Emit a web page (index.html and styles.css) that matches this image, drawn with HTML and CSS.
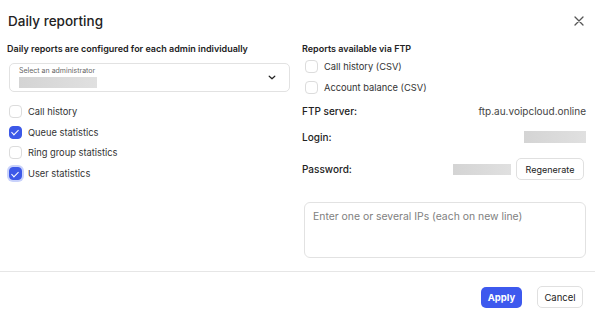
FILE: index.html
```html
<!DOCTYPE html>
<html lang="en">
<head>
    <meta charset="UTF-8">
    <meta name="viewport" content="width=device-width, initial-scale=1.0">
    <title>Daily reporting</title>
    <link rel="stylesheet" href="styles.css">
</head>
<body>
    <div class="modal">
        <div class="modal-header">
            <h1 class="title">Daily reporting</h1>
            <button class="close" aria-label="Close">
                <svg width="10" height="10" viewBox="0 0 10 10"><path d="M1 1L9 9M9 1L1 9" stroke="#555" stroke-width="1.3" stroke-linecap="round"/></svg>
            </button>
        </div>

        <div class="modal-body">
            <div class="col-left">
                <div class="section-label">Daily reports are configured for each admin individually</div>
                <div class="select">
                    <div class="select-text">
                        <span class="select-label">Select an administrator</span>
                        <span class="blur blur-admin"></span>
                    </div>
                    <svg class="chevron" width="8" height="5" viewBox="0 0 8 5"><path d="M1.2 1.2L4 3.8L6.8 1.2" fill="none" stroke="#222" stroke-width="1.2" stroke-linecap="round" stroke-linejoin="round"/></svg>
                </div>
                <div class="checks">
                    <label class="check"><span class="box"></span>Call history</label>
                    <label class="check"><span class="box checked"></span>Queue statistics</label>
                    <label class="check"><span class="box"></span>Ring group statistics</label>
                    <label class="check"><span class="box checked focus"></span>User statistics</label>
                </div>
            </div>

            <div class="col-right">
                <div class="section-label">Reports available via FTP</div>
                <div class="checks">
                    <label class="check"><span class="box"></span>Call history (CSV)</label>
                    <label class="check"><span class="box"></span>Account balance (CSV)</label>
                </div>
                <div class="info-row row-server">
                    <span class="info-label">FTP server:</span>
                    <span class="info-value">ftp.au.voipcloud.online</span>
                </div>
                <div class="info-row row-login">
                    <span class="info-label">Login:</span>
                    <span class="blur blur-login"></span>
                </div>
                <div class="info-row row-pass">
                    <span class="info-label">Password:</span>
                    <span class="pass-value">
                        <span class="blur blur-pass"></span>
                        <button class="btn btn-outline btn-regen">Regenerate</button>
                    </span>
                </div>
                <textarea class="ip-input" placeholder="Enter one or several IPs (each on new line)"></textarea>
            </div>
        </div>

        <div class="modal-footer">
            <button class="btn btn-primary">Apply</button>
            <button class="btn btn-outline btn-cancel">Cancel</button>
        </div>
    </div>
</body>
</html>
```

FILE: styles.css
```css
body {
    font-family: 'Inter', 'Liberation Sans', sans-serif;
    margin: 0;
    padding: 0;
    background-color: #fff;
    color: #222;
}

.modal {
    width: 595px;
    height: 319px;
    background: #fff;
}

.modal-header {
    display: flex;
    justify-content: space-between;
    align-items: center;
    height: 42px;
    padding: 0 9px 0 8px;
}

.title {
    margin: 0;
    font-size: 13.5px;
    font-weight: 500;
    color: #222;
}

.close {
    border: none;
    background: none;
    padding: 0;
    width: 14px;
    height: 14px;
    display: flex;
    align-items: center;
    justify-content: center;
    cursor: pointer;
}

.modal-body {
    display: flex;
    gap: 12px;
    padding: 0 9px 0 7px;
    height: 229px;
    border-bottom: 1px solid #e6e6e6;
}

.col-left {
    width: 283px;
}

.col-right {
    flex: 1;
    display: flex;
    flex-direction: column;
}

.section-label {
    font-size: 9px;
    font-weight: 600;
    line-height: 14px;
    color: #222;
}

.select {
    margin: 7px 0 0 2px;
    height: 27px;
    border: 1px solid #e2e2e2;
    border-radius: 5px;
    display: flex;
    align-items: center;
    justify-content: space-between;
    padding: 0 13px 0 9px;
}

.select-text {
    display: flex;
    flex-direction: column;
    gap: 2px;
}

.select-label {
    font-size: 7px;
    color: #666;
    line-height: 9px;
    margin-top: -1px;
}

.blur {
    display: block;
    background: linear-gradient(90deg, #d4d4d4, #e0e0e0);
}

.blur-admin {
    width: 78px;
    height: 11px;
}

.blur-login {
    width: 62px;
    height: 12px;
}

.blur-pass {
    width: 58px;
    height: 11px;
}

.checks {
    margin-top: 9px;
    margin-left: 2px;
}

.col-right .checks {
    margin-top: 0;
}

.check {
    display: flex;
    align-items: center;
    gap: 6px;
    height: 20.8px;
    font-size: 9.3px;
    color: #333;
}

.box {
    width: 11px;
    height: 11px;
    border: 1px solid #dcdcdc;
    border-radius: 4px;
    background: #fff;
    position: relative;
}

.box.checked {
    background: #3d59e8;
    border-color: #3d59e8;
}

.box.checked::after {
    content: "";
    position: absolute;
    left: 3px;
    top: 1.5px;
    width: 3px;
    height: 6px;
    border: solid #fff;
    border-width: 0 1.6px 1.6px 0;
    transform: rotate(45deg);
}

.box.focus {
    box-shadow: 0 0 0 2px #c9d2fb;
}

.col-right .check {
    margin-left: 1px;
    height: 21px;
}

.info-row {
    display: flex;
    justify-content: space-between;
    align-items: center;
    font-size: 10px;
}

.info-label {
    font-weight: 500;
    color: #222;
}

.info-value {
    color: #444;
}

.row-server {
    margin-top: 3px;
    height: 20px;
}

.row-login {
    margin-top: 6px;
    height: 20px;
}

.row-pass {
    margin-top: 11px;
    height: 22px;
}

.pass-value {
    display: flex;
    align-items: center;
    gap: 5px;
    margin-right: 2px;
}

.btn {
    font-family: inherit;
    font-size: 9.5px;
    border-radius: 5px;
    cursor: pointer;
    padding: 0;
}

.btn-outline {
    background: #fff;
    border: 1px solid #e0e0e0;
    color: #222;
}

.btn-regen {
    width: 68px;
    height: 22px;
    font-size: 9px;
}

.ip-input {
    margin-top: 22px;
    margin-left: 2px;
    width: 282px;
    height: 56px;
    box-sizing: border-box;
    border: 1px solid #e2e2e2;
    border-radius: 6px;
    padding: 7px 8px;
    resize: none;
    font-family: inherit;
    font-size: 10.4px;
    outline: none;
}

.ip-input::placeholder {
    color: #808080;
}

.modal-footer {
    display: flex;
    justify-content: flex-end;
    align-items: center;
    gap: 15px;
    padding: 14px 12px 0 0;
}

.btn-primary {
    background: #3d59ee;
    border: none;
    color: #fff;
    font-weight: 700;
    width: 41px;
    height: 21px;
}

.btn-cancel {
    width: 46px;
    height: 22px;
}
```
